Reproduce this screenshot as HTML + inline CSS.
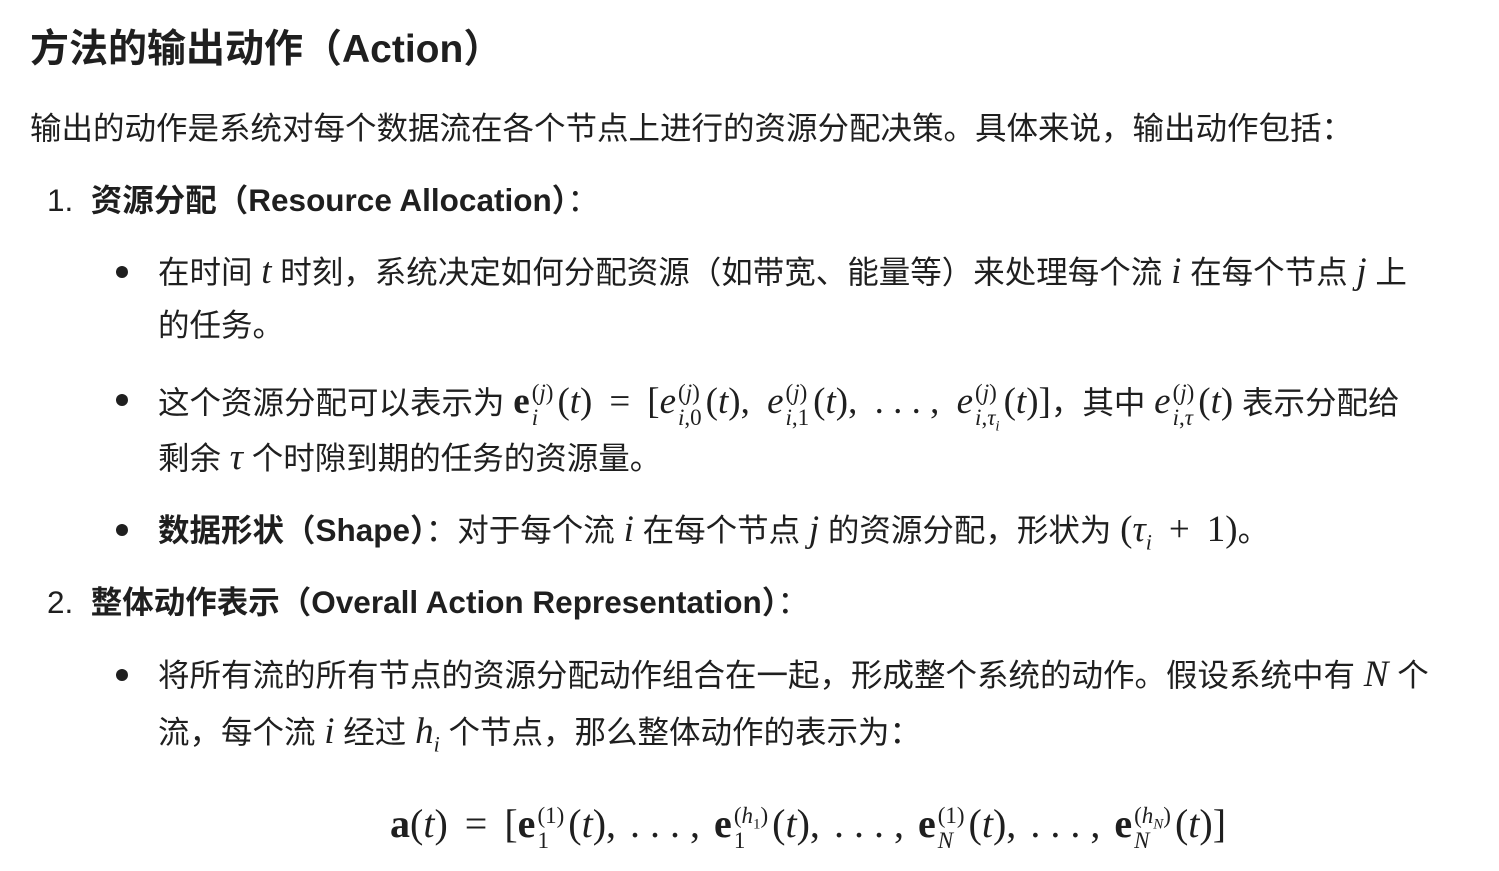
<!DOCTYPE html>
<html><head><meta charset="utf-8">
<style>
body{margin:0;width:1499px;height:871px;background:#fff;position:relative;overflow:hidden;
font-family:"Liberation Sans","Noto Sans CJK SC",sans-serif;color:#1f1f1f;}
.l{position:absolute;white-space:nowrap;font-size:31.5px;line-height:40px;}
.h{font-size:39px;font-weight:bold;line-height:50px;}
b{font-weight:bold;}
.m{font-family:"Liberation Serif","DejaVu Serif",serif;font-size:37px;}
.i{font-style:italic;}
.bf{font-weight:bold;font-style:normal;}
sup,sub{font-size:22px;line-height:0;}
.ss{display:inline-flex;flex-direction:column;vertical-align:middle;font-size:23px;line-height:25px;margin-left:2px;margin-right:4px;}
.sp{display:inline-block;width:17px;}
.c{display:inline-block;width:8px;}
.dot{position:absolute;width:12px;height:12px;border-radius:50%;background:#1f1f1f;}
</style></head><body>
<div class="l h" style="left:30px;top:25px">方法的输出动作（Action）</div>
<div class="l" style="left:30px;top:108px">输出的动作是系统对每个数据流在各个节点上进行的资源分配决策。具体来说，输出动作包括：</div>
<div class="l" style="left:47px;top:180px">1.&nbsp;&nbsp;<b>资源分配（Resource Allocation）</b>：</div>
<div class="dot" style="left:116px;top:266px"></div>
<div class="l" style="left:158px;top:252px">在时间 <span class="m i">t</span> 时刻，系统决定如何分配资源（如带宽、能量等）来处理每个流 <span class="m i">i</span> 在每个节点 <span class="m i">j</span> 上</div>
<div class="l" style="left:158px;top:305px">的任务。</div>
<div class="dot" style="left:116px;top:394px"></div>
<div class="l" style="left:158px;top:380px">这个资源分配可以表示为 <span class="m"><span class="bf">e</span><span class="ss"><span>(<i>j</i>)</span><span><i>i</i></span></span>(<i>t</i>)<span class="sp"></span>=<span class="sp"></span>[<i>e</i><span class="ss"><span>(<i>j</i>)</span><span><i>i</i>,0</span></span>(<i>t</i>),<span class="c"></span> <i>e</i><span class="ss"><span>(<i>j</i>)</span><span><i>i</i>,1</span></span>(<i>t</i>),<span class="c"></span> . . . ,<span class="c"></span> <i>e</i><span class="ss"><span>(<i>j</i>)</span><span><i>i</i>,<i>τ<sub style="font-size:15px">i</sub></i></span></span>(<i>t</i>)]</span>，其中 <span class="m"><i>e</i><span class="ss"><span>(<i>j</i>)</span><span><i>i</i>,<i>τ</i></span></span>(<i>t</i>)</span> 表示分配给</div>
<div class="l" style="left:158px;top:438px">剩余 <span class="m i">τ</span> 个时隙到期的任务的资源量。</div>
<div class="dot" style="left:116px;top:524px"></div>
<div class="l" style="left:158px;top:510px"><b>数据形状（Shape）</b>：对于每个流 <span class="m i">i</span> 在每个节点 <span class="m i">j</span> 的资源分配，形状为 <span class="m">(<i>τ<sub>i</sub></i><span class="sp"></span>+<span class="sp"></span>1)</span>。</div>
<div class="l" style="left:47px;top:582px">2.&nbsp;&nbsp;<b>整体动作表示（Overall Action Representation）</b>：</div>
<div class="dot" style="left:116px;top:669px"></div>
<div class="l" style="left:158px;top:655px">将所有流的所有节点的资源分配动作组合在一起，形成整个系统的动作。假设系统中有 <span class="m i">N</span> 个</div>
<div class="l" style="left:158px;top:712px">流，每个流 <span class="m i">i</span> 经过 <span class="m"><i>h<sub>i</sub></i></span> 个节点，那么整体动作的表示为：</div>
<div class="l m" style="left:390px;top:799px;font-size:40px;line-height:50px"><span class="bf">a</span>(<i>t</i>)<span class="sp"></span>=<span class="sp"></span>[<span class="bf">e</span><span class="ss"><span>(1)</span><span>1</span></span>(<i>t</i>),<span class="c" style="width:4px"></span> . . . ,<span class="c" style="width:4px"></span> <span class="bf">e</span><span class="ss"><span>(<i>h</i><sub style="font-size:15px">1</sub>)</span><span>1</span></span>(<i>t</i>),<span class="c" style="width:4px"></span> . . . ,<span class="c" style="width:4px"></span> <span class="bf">e</span><span class="ss"><span>(1)</span><span><i>N</i></span></span>(<i>t</i>),<span class="c" style="width:4px"></span> . . . ,<span class="c" style="width:4px"></span> <span class="bf">e</span><span class="ss"><span>(<i>h<sub style="font-size:15px">N</sub></i>)</span><span><i>N</i></span></span>(<i>t</i>)]</div>
</body></html>
